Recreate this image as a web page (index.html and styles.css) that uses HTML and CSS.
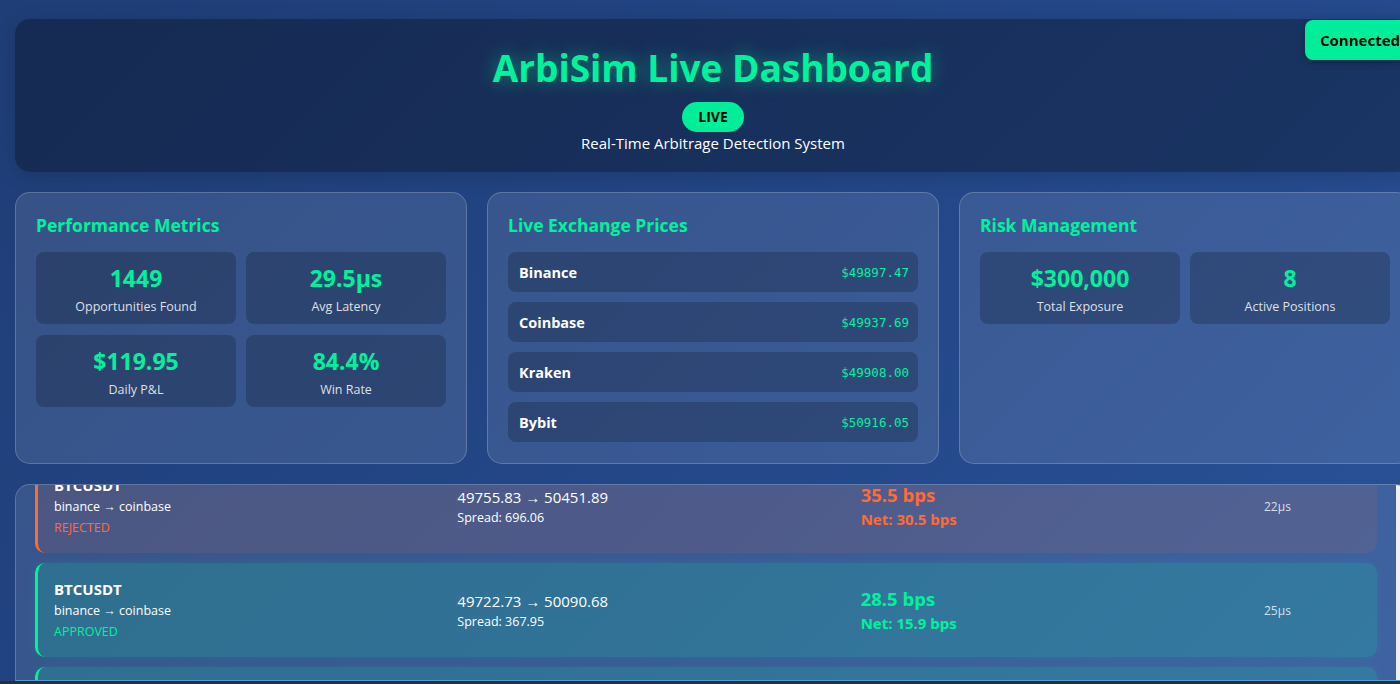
FILE: index.html
```html
<!DOCTYPE html>
<html>
<head>
    <title>ArbiSim Live Dashboard</title>
    <link rel="stylesheet" href="styles.css">
</head>
<body>
    <div class="status">Connected</div>
    <div class="dashboard">
        <header class="header">
            <h1>ArbiSim Live Dashboard</h1>
            <span class="liveBadge">LIVE</span>
            <p>Real-Time Arbitrage Detection System</p>
        </header>

        <div class="cards">
            <section class="card">
                <h2>Performance Metrics</h2>
                <div class="metricGrid">
                    <div class="metric">
                        <div class="value">1449</div>
                        <div class="label">Opportunities Found</div>
                    </div>
                    <div class="metric">
                        <div class="value">29.5μs</div>
                        <div class="label">Avg Latency</div>
                    </div>
                    <div class="metric">
                        <div class="value">$119.95</div>
                        <div class="label">Daily P&amp;L</div>
                    </div>
                    <div class="metric">
                        <div class="value">84.4%</div>
                        <div class="label">Win Rate</div>
                    </div>
                </div>
            </section>

            <section class="card">
                <h2>Live Exchange Prices</h2>
                <div class="prices">
                    <div class="priceRow"><span class="exchange">Binance</span><span class="price">$49897.47</span></div>
                    <div class="priceRow"><span class="exchange">Coinbase</span><span class="price">$49937.69</span></div>
                    <div class="priceRow"><span class="exchange">Kraken</span><span class="price">$49908.00</span></div>
                    <div class="priceRow"><span class="exchange">Bybit</span><span class="price">$50916.05</span></div>
                </div>
            </section>

            <section class="card">
                <h2>Risk Management</h2>
                <div class="metricGrid">
                    <div class="metric">
                        <div class="value">$300,000</div>
                        <div class="label">Total Exposure</div>
                    </div>
                    <div class="metric">
                        <div class="value">8</div>
                        <div class="label">Active Positions</div>
                    </div>
                </div>
            </section>
        </div>

        <div class="feedPanel">
            <div class="feed" id="feed">
                <div class="opp rejected">
                    <div class="pair">
                        <div class="symbol">BTCUSDT</div>
                        <div class="route">binance → coinbase</div>
                        <div class="state">REJECTED</div>
                    </div>
                    <div class="spread">
                        <div class="prices2">49755.83 → 50451.89</div>
                        <div class="spreadVal">Spread: 696.06</div>
                    </div>
                    <div class="profit">
                        <div class="bps">35.5 bps</div>
                        <div class="net">Net: 30.5 bps</div>
                    </div>
                    <div class="latency">22μs</div>
                </div>
                <div class="opp approved">
                    <div class="pair">
                        <div class="symbol">BTCUSDT</div>
                        <div class="route">binance → coinbase</div>
                        <div class="state">APPROVED</div>
                    </div>
                    <div class="spread">
                        <div class="prices2">49722.73 → 50090.68</div>
                        <div class="spreadVal">Spread: 367.95</div>
                    </div>
                    <div class="profit">
                        <div class="bps">28.5 bps</div>
                        <div class="net">Net: 15.9 bps</div>
                    </div>
                    <div class="latency">25μs</div>
                </div>
                <div class="opp approved">
                    <div class="pair">
                        <div class="symbol">BTCUSDT</div>
                        <div class="route">binance → kraken</div>
                        <div class="state">APPROVED</div>
                    </div>
                    <div class="spread">
                        <div class="prices2">49731.10 → 50012.44</div>
                        <div class="spreadVal">Spread: 281.34</div>
                    </div>
                    <div class="profit">
                        <div class="bps">21.2 bps</div>
                        <div class="net">Net: 11.4 bps</div>
                    </div>
                    <div class="latency">24μs</div>
                </div>
                <div class="opp approved">
                    <div class="pair">
                        <div class="symbol">BTCUSDT</div>
                        <div class="route">kraken → bybit</div>
                        <div class="state">APPROVED</div>
                    </div>
                    <div class="spread">
                        <div class="prices2">49908.00 → 50916.05</div>
                        <div class="spreadVal">Spread: 1008.05</div>
                    </div>
                    <div class="profit">
                        <div class="bps">19.8 bps</div>
                        <div class="net">Net: 9.7 bps</div>
                    </div>
                    <div class="latency">27μs</div>
                </div>
            </div>
            <div class="track"></div>
        </div>
    </div>
    <div class="windowEdge"></div>
    <script>
        document.getElementById('feed').scrollTop = 46;
    </script>
</body>
</html>
```

FILE: styles.css
```css
html, body {
    height: 100%;
}
body {
    margin: 0;
    overflow: hidden;
    font-family: 'Open Sans', 'Noto Sans', sans-serif;
    color: #fff;
    background: linear-gradient(135deg, #1f3d76 0%, #24488a 60%, #2a5298 100%);
}

.dashboard {
    width: 1396px;
    padding: 19px 0 0 15px;
}

/* header */
.header {
    display: flex;
    flex-direction: column;
    align-items: center;
    padding: 25px 20px 18px;
    background: rgba(0, 0, 0, 0.3);
    border-radius: 15px;
    box-shadow: 0 4px 20px rgba(0, 0, 0, 0.15);
}
.header h1 {
    margin: 0 0 10px;
    font-size: 37px;
    line-height: 48px;
    font-weight: 700;
    color: #00f29c;
    text-shadow: 0 0 18px rgba(0, 255, 150, 0.45);
}
.liveBadge {
    padding: 5px 16px;
    font-size: 14px;
    line-height: 20px;
    font-weight: 700;
    color: #000;
    background: #00ee9a;
    border-radius: 15px;
}
.header p {
    margin: 0;
    font-size: 15px;
    line-height: 22px;
}
.status {
    position: fixed;
    top: 20px;
    left: 1305px;
    padding: 9px 15px;
    font-size: 15px;
    line-height: 22px;
    font-weight: 700;
    color: #000;
    background: #00ee9a;
    border-radius: 8px;
    box-shadow: 0 2px 8px rgba(0, 0, 0, 0.3);
}

/* cards */
.cards {
    display: grid;
    grid-template-columns: repeat(3, 1fr);
    gap: 20px;
    margin-top: 20px;
}
.card {
    padding: 20px 20px 21px;
    background: rgba(255, 255, 255, 0.1);
    border: 1px solid rgba(255, 255, 255, 0.2);
    border-radius: 15px;
}
.card h2 {
    margin: 0 0 14px;
    font-size: 17.5px;
    line-height: 25px;
    font-weight: 700;
    color: #00f29c;
}

.metricGrid {
    display: grid;
    grid-template-columns: 1fr 1fr;
    gap: 11px 10px;
}
.metric {
    box-sizing: border-box;
    height: 72px;
    padding-top: 4px;
    display: flex;
    flex-direction: column;
    align-items: center;
    justify-content: center;
    background: rgba(0, 0, 0, 0.2);
    border-radius: 8px;
}
.metric .value {
    font-size: 23px;
    line-height: 28px;
    font-weight: 700;
    color: #00f29c;
}
.metric .label {
    margin-top: 6px;
    font-size: 12.5px;
    line-height: 18px;
    color: rgba(255, 255, 255, 0.85);
}

.prices {
    display: flex;
    flex-direction: column;
    gap: 10px;
}
.priceRow {
    height: 40px;
    display: flex;
    justify-content: space-between;
    align-items: center;
    padding: 0 9px 0 11px;
    background: rgba(0, 0, 0, 0.2);
    border-radius: 8px;
}
.exchange {
    font-size: 14.5px;
    font-weight: 700;
}
.price {
    font-family: 'DejaVu Sans Mono', 'Liberation Mono', monospace;
    font-size: 12.5px;
    color: #00f29c;
}

/* opportunity feed */
.feedPanel {
    display: flex;
    box-sizing: border-box;
    height: 197px;
    margin-top: 20px;
    background: rgba(255, 255, 255, 0.1);
    border: 1px solid rgba(255, 255, 255, 0.2);
    border-bottom-color: rgba(90, 170, 230, 0.8);
    border-radius: 15px 15px 0 0;
    overflow: hidden;
}
.feed {
    flex: 1;
    padding: 20px 19px 20px 19px;
    overflow: hidden;
}
.track {
    width: 14px;
    background: #f0f0f0;
}
.opp {
    display: grid;
    grid-template-columns: 1fr 1fr 1fr 93px;
    align-items: center;
    margin-bottom: 10px;
    padding: 15px 20px 15px 16px;
    border-left: 3px solid;
    border-radius: 10px;
}
.opp.rejected {
    border-color: #ff6b35;
    background: rgba(255, 107, 53, 0.1);
}
.opp.approved {
    border-color: #00f29c;
    background: rgba(0, 255, 160, 0.15);
    box-shadow: 0 0 10px rgba(0, 255, 160, 0.1);
}
.symbol {
    font-size: 15px;
    line-height: 22px;
    font-weight: 700;
}
.route {
    font-size: 12.5px;
    line-height: 21px;
}
.state {
    font-size: 12.5px;
    line-height: 21px;
}
.rejected .state, .rejected .profit {
    color: #ff6b35;
}
.approved .state, .approved .profit {
    color: #00f29c;
}
.prices2 {
    font-size: 15px;
    line-height: 22px;
}
.spreadVal {
    margin-top: 1px;
    font-size: 12.5px;
    line-height: 18px;
}
.bps {
    font-size: 18.5px;
    line-height: 26px;
    font-weight: 700;
}
.net {
    margin-top: 1px;
    font-size: 15px;
    line-height: 21px;
    font-weight: 700;
}
.latency {
    font-size: 12px;
    color: rgba(255, 255, 255, 0.8);
}

.windowEdge {
    position: fixed;
    left: 0;
    right: 0;
    bottom: 0;
    height: 3px;
    background: #2b2e35;
}
```
